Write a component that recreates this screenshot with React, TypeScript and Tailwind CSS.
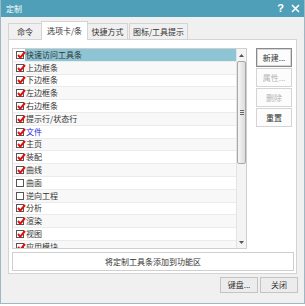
import React from "react";

type Item = { label: string; checked: boolean; blue?: boolean; selected?: boolean };

const items: Item[] = [
  { label: "快速访问工具条", checked: true, selected: true },
  { label: "上边框条", checked: true },
  { label: "下边框条", checked: true },
  { label: "左边框条", checked: true },
  { label: "右边框条", checked: true },
  { label: "提示行/状态行", checked: true },
  { label: "文件", checked: true, blue: true },
  { label: "主页", checked: true },
  { label: "装配", checked: true },
  { label: "曲线", checked: true },
  { label: "曲面", checked: false },
  { label: "逆向工程", checked: false },
  { label: "分析", checked: true },
  { label: "渲染", checked: true },
  { label: "视图", checked: true },
  { label: "应用模块", checked: true },
];

const tabs = ["命令", "选项卡/条", "快捷方式", "图标/工具提示"];

function CheckBox({ checked }: { checked: boolean }) {
  return (
    <span className="relative flex h-[8px] w-[8px] shrink-0 items-center justify-center border border-[#555] bg-white">
      {checked ? (
        <svg width="9" height="8" viewBox="0 0 9 8" className="absolute left-[0px] top-[-1px]">
          <path d="M1 4 L3.3 6.6 L8 1" fill="none" stroke="#e01010" strokeWidth="2" />
        </svg>
      ) : null}
    </span>
  );
}

function SideButton({ label, disabled, isDefault }: { label: string; disabled?: boolean; isDefault?: boolean }) {
  return (
    <div
      className={`flex h-[19px] w-[36px] items-center justify-center border bg-[#fcfcfc] ${
        isDefault ? "border-[#8a8a8a] shadow-[inset_0_0_0_1px_#d6d6d6]" : "border-[#d4d4d4]"
      } ${disabled ? "text-[#b4b4b4]" : "text-[#333]"}`}
    >
      {label}
    </div>
  );
}

export default function App() {
  return (
    <div className="h-[306px] w-[305px] bg-white font-['Noto_Sans_CJK_SC',sans-serif] text-[8px] leading-none text-[#333]">
      <div className="flex h-[304px] flex-col border-x border-b border-[#9fb9c4] bg-[#f0f0f0]">
        <div className="flex h-[17px] shrink-0 items-center justify-between bg-[#4f9fb8] pl-[5px] pr-[4px] text-white">
          <span className="text-[8px]">定制</span>
          <div className="flex items-center gap-[7px]">
            <span className="font-['Liberation_Sans',sans-serif] text-[11px] font-bold">?</span>
            <svg width="9" height="9" viewBox="0 0 9 9">
              <path d="M1 1 L8 8 M8 1 L1 8" stroke="#fff" strokeWidth="1.6" />
            </svg>
          </div>
        </div>

        <div className="mt-[4px] flex h-[18px] shrink-0 items-end pl-[7px]">
          {tabs.map((tab, i) =>
            i === 1 ? (
              <div
                key={tab}
                className="relative z-10 mb-[-1px] flex h-[19px] w-[47px] items-center justify-center border border-b-0 border-[#d4d4d4] bg-white"
              >
                {tab}
              </div>
            ) : (
              <div
                key={tab}
                className={`flex h-[16px] items-center justify-center border border-b-0 border-[#d4d4d4] bg-[#f0f0f0] ${
                  i === 0 ? "w-[33px] border-r-0" : i === 2 ? "w-[40px] border-l-0" : "ml-[1px] w-[59px]"
                }`}
              >
                {tab}
              </div>
            ),
          )}
        </div>

        <div className="mx-[7px] flex h-[235px] shrink-0 flex-col border border-[#d4d4d4] bg-white pl-[3px] pr-[4px] pt-[8px]">
          <div className="flex gap-[9px]">
            <div className="flex h-[201px] w-[237px] border border-[#cfcfcf] bg-white">
              <div className="flex-1 overflow-hidden">
                {items.map((item, i) => (
                  <div
                    key={item.label}
                    className={`flex h-[12.8px] items-center border-b border-[#ebebeb] ${
                      i % 2 === 1 ? "bg-[#f8f8f8]" : "bg-white"
                    }`}
                  >
                    <div className="flex w-[11px] shrink-0 justify-end">
                      <CheckBox checked={item.checked} />
                    </div>
                    <div
                      className={`ml-[1px] flex h-full flex-1 items-center pl-[1px] ${
                        item.selected ? "bg-[#8dc5d5]" : ""
                      } ${item.blue ? "text-[#1d1de6]" : ""}`}
                    >
                      {item.label}
                    </div>
                  </div>
                ))}
              </div>
              <div className="flex w-[10px] shrink-0 flex-col items-center bg-[#f4f4f4] border-l border-[#e4e4e4]">
                <div className="flex h-[12px] items-center justify-center">
                  <svg width="5" height="3" viewBox="0 0 5 3">
                    <path d="M0 3 L2.5 0 L5 3 Z" fill="#555" />
                  </svg>
                </div>
                <div className="flex h-[103px] w-[9px] items-center justify-center rounded-[2px] border border-[#a8a8a8] bg-[linear-gradient(to_right,#f6f6f6,#dcdcdc)]">
                  <div className="flex flex-col gap-[1px]">
                    <div className="h-px w-[4px] bg-[#666]" />
                    <div className="h-px w-[4px] bg-[#666]" />
                    <div className="h-px w-[4px] bg-[#666]" />
                  </div>
                </div>
                <div className="flex-1" />
                <div className="flex h-[12px] items-center justify-center">
                  <svg width="5" height="3" viewBox="0 0 5 3">
                    <path d="M0 0 L2.5 3 L5 0 Z" fill="#555" />
                  </svg>
                </div>
              </div>
            </div>
            <div className="flex flex-col gap-[1px]">
              <SideButton label="新建..." isDefault />
              <SideButton label="属性..." disabled />
              <SideButton label="删除" disabled />
              <SideButton label="重置" />
            </div>
          </div>
          <div className="mt-[3px] flex h-[19px] w-[282px] items-center justify-center border border-[#cfcfcf] bg-white">
            将定制工具条添加到功能区
          </div>
        </div>

        <div className="mt-[3px] flex justify-end gap-[2px] pr-[6px]">
          <div className="flex h-[16px] w-[38px] items-center justify-center border border-[#c4c4c4] bg-[#ececec]">
            键盘...
          </div>
          <div className="flex h-[16px] w-[38px] items-center justify-center border border-[#c4c4c4] bg-[#ececec]">
            关闭
          </div>
        </div>
      </div>
    </div>
  );
}
